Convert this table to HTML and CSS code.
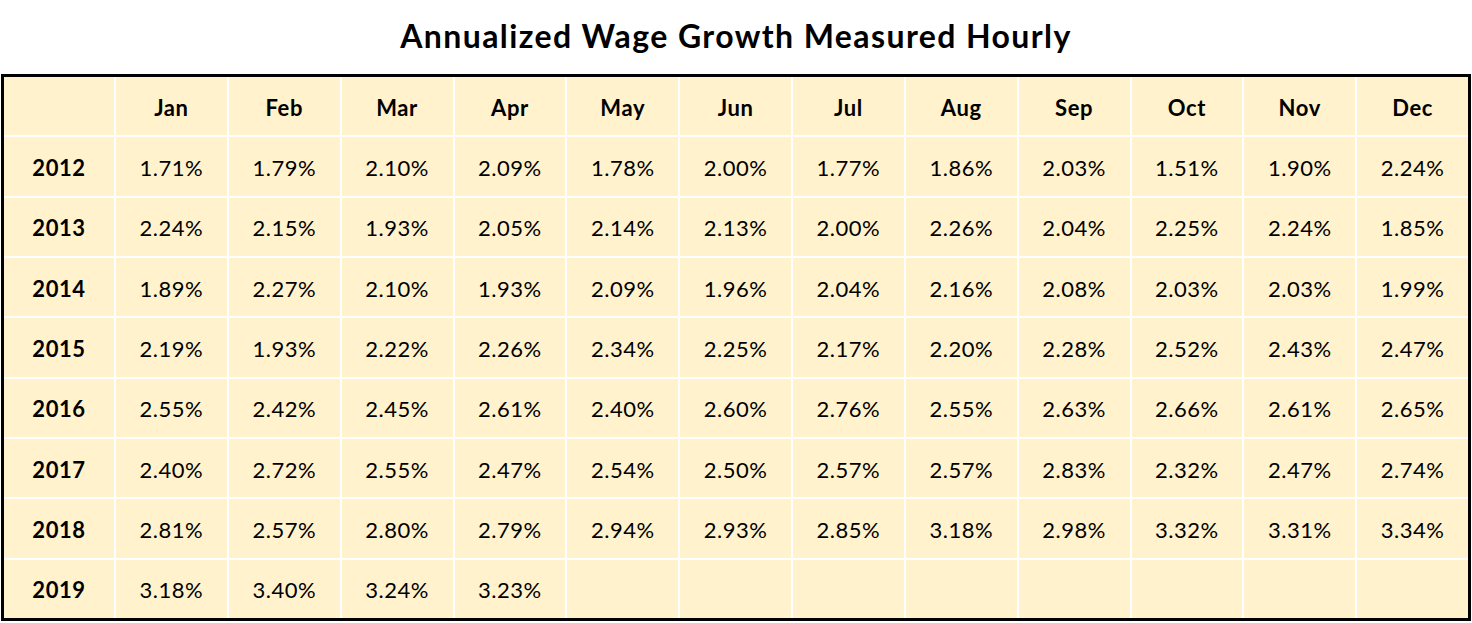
FILE: index.html
```html
<!DOCTYPE html>
<html>
<head>
<meta charset="utf-8">
<link rel="stylesheet" href="styles.css">
</head>
<body>
<div class="page">
  <h1 class="title">Annualized Wage Growth Measured Hourly</h1>
  <div class="table">
    <div class="cell head"></div>
    <div class="cell head">Jan</div><div class="cell head">Feb</div><div class="cell head">Mar</div><div class="cell head">Apr</div><div class="cell head">May</div><div class="cell head">Jun</div><div class="cell head">Jul</div><div class="cell head">Aug</div><div class="cell head">Sep</div><div class="cell head">Oct</div><div class="cell head">Nov</div><div class="cell head">Dec</div>

    <div class="cell head">2012</div>
    <div class="cell">1.71%</div><div class="cell">1.79%</div><div class="cell">2.10%</div><div class="cell">2.09%</div><div class="cell">1.78%</div><div class="cell">2.00%</div><div class="cell">1.77%</div><div class="cell">1.86%</div><div class="cell">2.03%</div><div class="cell">1.51%</div><div class="cell">1.90%</div><div class="cell">2.24%</div>

    <div class="cell head">2013</div>
    <div class="cell">2.24%</div><div class="cell">2.15%</div><div class="cell">1.93%</div><div class="cell">2.05%</div><div class="cell">2.14%</div><div class="cell">2.13%</div><div class="cell">2.00%</div><div class="cell">2.26%</div><div class="cell">2.04%</div><div class="cell">2.25%</div><div class="cell">2.24%</div><div class="cell">1.85%</div>

    <div class="cell head">2014</div>
    <div class="cell">1.89%</div><div class="cell">2.27%</div><div class="cell">2.10%</div><div class="cell">1.93%</div><div class="cell">2.09%</div><div class="cell">1.96%</div><div class="cell">2.04%</div><div class="cell">2.16%</div><div class="cell">2.08%</div><div class="cell">2.03%</div><div class="cell">2.03%</div><div class="cell">1.99%</div>

    <div class="cell head">2015</div>
    <div class="cell">2.19%</div><div class="cell">1.93%</div><div class="cell">2.22%</div><div class="cell">2.26%</div><div class="cell">2.34%</div><div class="cell">2.25%</div><div class="cell">2.17%</div><div class="cell">2.20%</div><div class="cell">2.28%</div><div class="cell">2.52%</div><div class="cell">2.43%</div><div class="cell">2.47%</div>

    <div class="cell head">2016</div>
    <div class="cell">2.55%</div><div class="cell">2.42%</div><div class="cell">2.45%</div><div class="cell">2.61%</div><div class="cell">2.40%</div><div class="cell">2.60%</div><div class="cell">2.76%</div><div class="cell">2.55%</div><div class="cell">2.63%</div><div class="cell">2.66%</div><div class="cell">2.61%</div><div class="cell">2.65%</div>

    <div class="cell head">2017</div>
    <div class="cell">2.40%</div><div class="cell">2.72%</div><div class="cell">2.55%</div><div class="cell">2.47%</div><div class="cell">2.54%</div><div class="cell">2.50%</div><div class="cell">2.57%</div><div class="cell">2.57%</div><div class="cell">2.83%</div><div class="cell">2.32%</div><div class="cell">2.47%</div><div class="cell">2.74%</div>

    <div class="cell head">2018</div>
    <div class="cell">2.81%</div><div class="cell">2.57%</div><div class="cell">2.80%</div><div class="cell">2.79%</div><div class="cell">2.94%</div><div class="cell">2.93%</div><div class="cell">2.85%</div><div class="cell">3.18%</div><div class="cell">2.98%</div><div class="cell">3.32%</div><div class="cell">3.31%</div><div class="cell">3.34%</div>

    <div class="cell head">2019</div>
    <div class="cell">3.18%</div><div class="cell">3.40%</div><div class="cell">3.24%</div><div class="cell">3.23%</div><div class="cell"></div><div class="cell"></div><div class="cell"></div><div class="cell"></div><div class="cell"></div><div class="cell"></div><div class="cell"></div><div class="cell"></div>
  </div>
</div>
</body>
</html>
```

FILE: styles.css
```css
html, body {
  margin: 0;
  padding: 0;
  background: #ffffff;
}

.page {
  width: 1472px;
  height: 623px;
  font-family: "Lato", "Open Sans", "Liberation Sans", sans-serif;
  color: #000;
}

.title {
  margin: 0;
  height: 74px;
  display: flex;
  align-items: center;
  justify-content: center;
  font-size: 32px;
  font-weight: 700;
  letter-spacing: 1.4px;
  padding-bottom: 4px;
  box-sizing: border-box;
}

.table {
  margin-left: 1px;
  width: 1470px;
  height: 547px;
  box-sizing: border-box;
  border: 3px solid #000;
  background: #ffffff;
  display: grid;
  grid-template-columns: 110px repeat(12, 1fr);
  grid-template-rows: repeat(9, 1fr);
  gap: 2px;
}

.cell {
  background: #fff2cc;
  display: flex;
  align-items: center;
  justify-content: center;
  padding-top: 2px;
  font-size: 22px;
  letter-spacing: 0.5px;
  font-weight: 400;
}

.cell.head {
  font-weight: 700;
  letter-spacing: 0.6px;
}
```
